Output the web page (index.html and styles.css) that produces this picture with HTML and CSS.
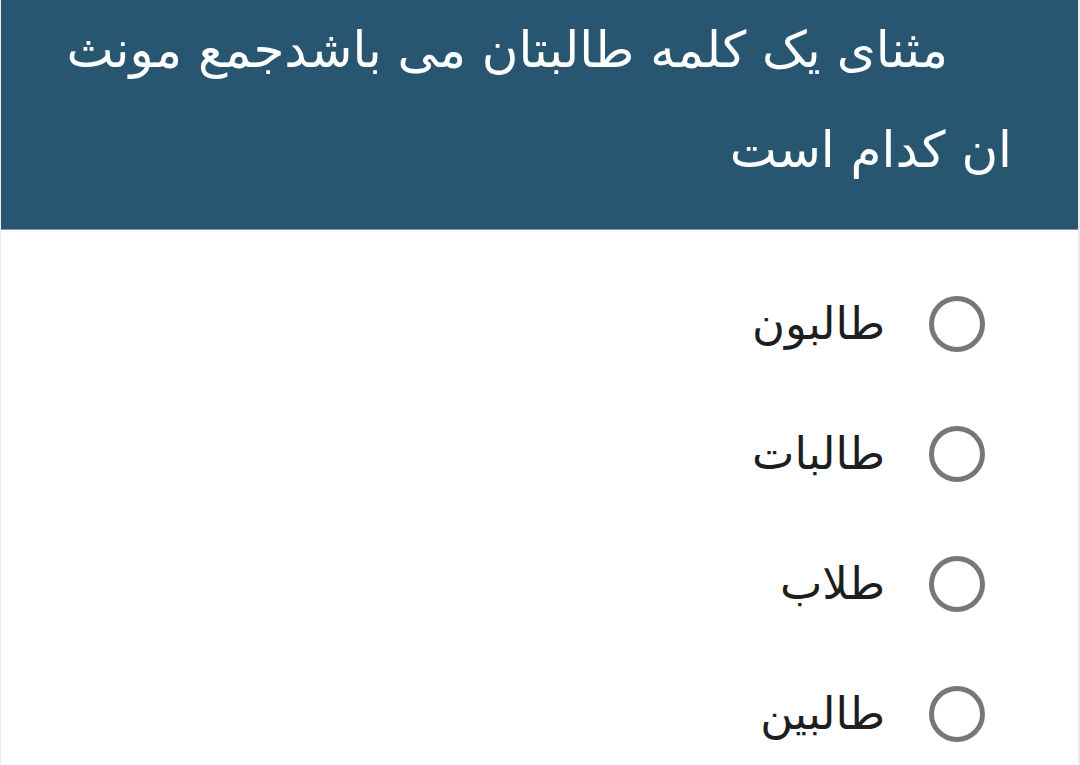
FILE: index.html
```html
<!DOCTYPE html>
<html lang="fa" dir="rtl">
<head>
<meta charset="utf-8">
<link rel="stylesheet" href="styles.css">
</head>
<body>
<div class="page">
  <header class="question">
    <p class="qtext"><span class="qmark" aria-hidden="true"></span>مثنای یک کلمه طالبتان می باشدجمع مونث ان کدام است</p>
  </header>
  <ul class="options">
    <li class="option"><span class="radio"></span><span class="label">طالبون</span></li>
    <li class="option"><span class="radio"></span><span class="label">طالبات</span></li>
    <li class="option"><span class="radio"></span><span class="label">طلاب</span></li>
    <li class="option"><span class="radio"></span><span class="label">طالبین</span></li>
  </ul>
</div>
</body>
</html>
```
FILE: styles.css
```css
html, body {
  margin: 0;
  padding: 0;
  background: #ffffff;
}
body {
  font-family: "DejaVu Sans", "Noto Sans", sans-serif;
  width: 1080px;
  height: 765px;
  overflow: hidden;
}
.page {
  height: 765px;
  border-left: 1px solid #ececec;
  border-right: 2px solid #ececec;
  box-sizing: border-box;
}
.question {
  background: #285670;
  border-bottom: 1px solid #7e9cae;
  height: 230px;
  box-sizing: border-box;
  padding: 0 66px 0 56px;
}
.qtext {
  margin: 0;
  color: #ffffff;
  font-size: 50px;
  line-height: 100px;
}
.qmark {
  display: inline-block;
  width: 64px;
  height: 30px;
}
.options {
  list-style: none;
  margin: 0;
  padding: 66px 93px 0 0;
  display: flex;
  flex-direction: column;
  gap: 74px;
}
.option {
  display: flex;
  align-items: center;
  gap: 44px;
  height: 56px;
}
.radio {
  width: 46px;
  height: 46px;
  border: 5px solid #777777;
  border-radius: 50%;
  flex: none;
}
.label {
  font-size: 45px;
  color: #1e1e1e;
  line-height: 56px;
}
```
